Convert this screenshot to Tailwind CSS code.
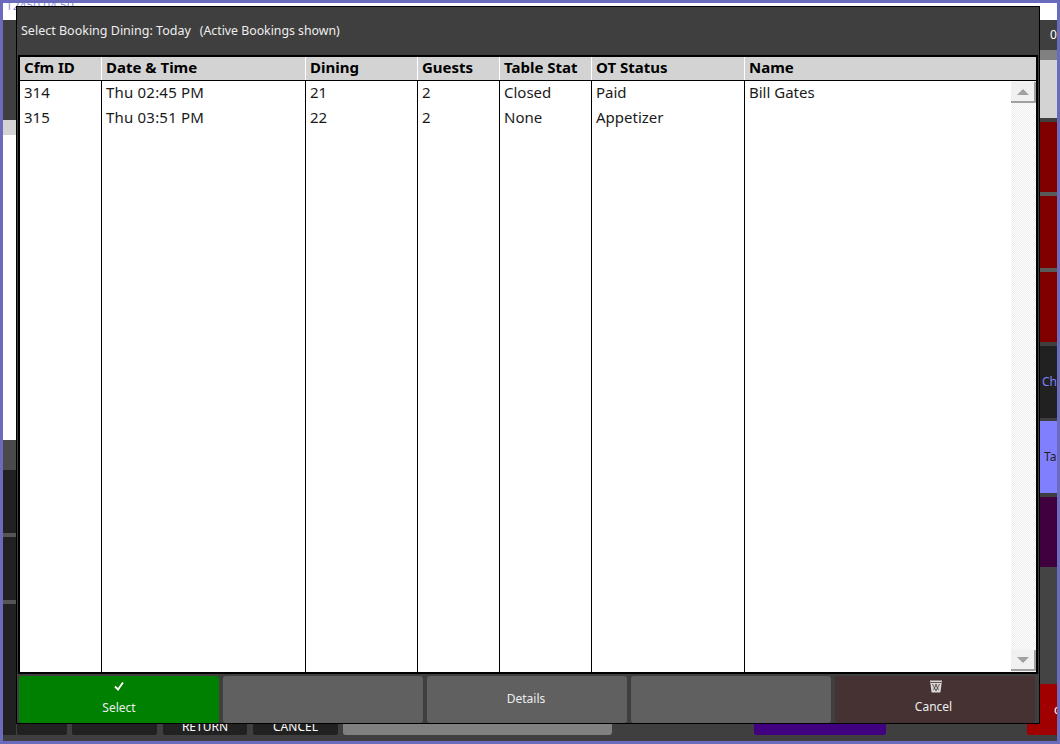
<!DOCTYPE html>
<html>
<head>
<meta charset="utf-8">
<script src="https://cdn.jsdelivr.net/npm/@tailwindcss/browser@4"></script>
</head>
<body class="m-0 overflow-hidden bg-[#6b6bbd]">
<div class="relative flex h-[744px] w-[1060px] flex-col overflow-hidden border-[3px] border-[#6b6bbd] bg-[#3f3f3f] font-['Noto_Sans','Open_Sans',sans-serif]">
  <!-- top white strip of the app behind -->
  <div class="h-[17px] shrink-0 overflow-hidden bg-white pl-[3px] text-[12px] leading-[12px] text-[#8f8fe0]"><div class="-mt-[3px]">T2450 04 50</div></div>
  <div class="flex min-h-0 flex-1">
    <!-- left column of the app behind -->
    <div class="flex w-[13px] flex-col">
      <div class="h-[100px] bg-[#3f3f3f]"></div>
      <div class="h-[15px] bg-[#d3d3d3]"></div>
      <div class="h-[305px] bg-white"></div>
      <div class="h-[30px] bg-[#4a4a4a]"></div>
      <div class="flex flex-1 flex-col gap-[4px] bg-[#555]">
        <div class="h-[63px] bg-[#212121]"></div>
        <div class="h-[63px] bg-[#212121]"></div>
        <div class="flex-1 bg-[#212121]"></div>
      </div>
      <div class="h-[6px] bg-[#3f3f3f]"></div>
    </div>
    <!-- centre of the app behind -->
    <div class="flex flex-1 flex-col justify-end">
      <div class="mb-[6px] flex h-[20px] items-end text-[12px] text-white">
        <div class="ml-[1px] h-full w-[50px] rounded-b-[2px] bg-[#212121]"></div>
        <div class="ml-[5px] h-full w-[85px] rounded-b-[2px] bg-[#212121]"></div>
        <div class="ml-[6px] flex h-full w-[84px] items-end justify-center rounded-b-[2px] bg-[#212121] leading-[16px]">RETURN</div>
        <div class="ml-[6px] flex h-full w-[85px] items-end justify-center rounded-b-[2px] bg-[#212121] leading-[16px]">CANCEL</div>
        <div class="ml-[5px] h-full w-[269px] rounded-b-[3px] bg-[#808080]"></div>
        <div class="ml-[142px] h-full w-[132px] rounded-b-[3px] bg-[#400080]"></div>
        <div class="ml-auto h-full w-[13px] rounded-bl-[3px] bg-[#a00000]"></div>
      </div>
    </div>
    <!-- right column of the app behind -->
    <div class="flex w-[17px] flex-col text-[12px]">
      <div class="flex h-[30px] items-center overflow-hidden bg-[#3f3f3f] pl-[10px] text-white">0</div>
      <div class="h-[10px] bg-[#808080]"></div>
      <div class="h-[58px] bg-[#d3d3d3]"></div>
      <div class="h-[4px] bg-[#3f3f3f]"></div>
      <div class="h-[70px] bg-[#800000]"></div>
      <div class="h-[4px] bg-[#5a5a5a]"></div>
      <div class="h-[72px] bg-[#800000]"></div>
      <div class="h-[4px] bg-[#5a5a5a]"></div>
      <div class="h-[70px] bg-[#800000]"></div>
      <div class="h-[4px] bg-[#3f3f3f]"></div>
      <div class="flex h-[72px] items-center overflow-hidden bg-[#212121] pl-[2px] text-[#8080ff]">Ch</div>
      <div class="h-[3px] bg-[#3f3f3f]"></div>
      <div class="flex h-[72px] items-center overflow-hidden bg-[#8080ff] pl-[4px] text-[#222]">Ta</div>
      <div class="h-[4px] bg-[#3f3f3f]"></div>
      <div class="h-[70px] bg-[#400040]"></div>
      <div class="h-[117px] bg-[#444]"></div>
      <div class="flex h-[51px] items-center overflow-hidden bg-[#a00000] pl-[14px] text-white">c</div>
      <div class="flex-1 bg-[#3f3f3f]"></div>
    </div>
  </div>

  <!-- modal dialog -->
  <div class="absolute left-[13px] top-[3px] flex h-[718px] w-[1024px] flex-col border border-black bg-[#3f3f3f]">
    <div class="flex h-[48px] items-center pl-[4px] text-[12.5px] text-[#eeeeee] whitespace-pre">Select Booking Dining: Today<span class="ml-[9px] text-[12.3px]">(Active Bookings shown)</span></div>
    <div class="mx-[1px] flex h-[619px] flex-col border-2 border-black bg-white text-[15px] text-[#1a1a1a]">
      <div class="flex h-[24px] shrink-0 border-b border-black bg-[#d3d3d3] font-bold leading-[20px] text-black">
        <div class="w-[82px] border-r border-white pl-[4px]">Cfm ID</div>
        <div class="w-[204px] border-r border-white pl-[4px]">Date &amp; Time</div>
        <div class="w-[112px] border-r border-white pl-[4px]">Dining</div>
        <div class="w-[82px] border-r border-white pl-[4px]">Guests</div>
        <div class="w-[92px] border-r border-white pl-[4px]">Table Stat</div>
        <div class="w-[153px] border-r border-white pl-[4px]">OT Status</div>
        <div class="flex-1 pl-[4px]">Name</div>
      </div>
      <div class="flex min-h-0 flex-1 leading-[23px]">
        <div class="w-[82px] border-r border-black pl-[4px]"><div class="h-[25px]">314</div><div class="h-[25px]">315</div></div>
        <div class="w-[204px] border-r border-black pl-[4px]"><div class="h-[25px] tracking-[0.2px]">Thu 02:45 PM</div><div class="h-[25px] tracking-[0.2px]">Thu 03:51 PM</div></div>
        <div class="w-[112px] border-r border-black pl-[4px]"><div class="h-[25px]">21</div><div class="h-[25px]">22</div></div>
        <div class="w-[82px] border-r border-black pl-[4px]"><div class="h-[25px]">2</div><div class="h-[25px]">2</div></div>
        <div class="w-[92px] border-r border-black pl-[4px]"><div class="h-[25px]">Closed</div><div class="h-[25px]">None</div></div>
        <div class="w-[153px] border-r border-black pl-[4px]"><div class="h-[25px]">Paid</div><div class="h-[25px]">Appetizer</div></div>
        <div class="flex-1 pl-[4px]"><div class="h-[25px]">Bill Gates</div></div>
        <div class="flex w-[25px] flex-col justify-between bg-[repeating-conic-gradient(#ececec_0_25%,#ffffff_0_50%)] bg-[length:2px_2px] py-[1px]">
          <div class="flex h-[21px] items-center justify-center border-r-2 border-b-2 border-[#a0a0a0] bg-[#f0f0f0]">
            <svg width="12" height="6" viewBox="0 0 12 6"><path d="M6 0L12 6H0Z" fill="#a0a0a0"/></svg>
          </div>
          <div class="flex h-[21px] items-center justify-center border-r-2 border-b-2 border-[#a0a0a0] bg-[#f0f0f0]">
            <svg width="12" height="6" viewBox="0 0 12 6"><path d="M0 0H12L6 6Z" fill="#a0a0a0"/></svg>
          </div>
        </div>
      </div>
    </div>
    <div class="mt-[2px] flex gap-[4px] pl-[2px] text-[12px] text-[#eeeeee]">
      <div class="flex h-[47px] w-[200px] flex-col items-center rounded-[3px] bg-[#008000] pt-[3px]">
        <svg class="h-[14px] w-[14px]" viewBox="0 0 14 14"><path d="M3 7.5L6 10.5L11 3.5" fill="none" stroke="#ffffff" stroke-width="1.8"/></svg>
        <span class="mt-[7px] leading-[16px]">Select</span>
      </div>
      <div class="h-[47px] w-[200px] rounded-[3px] bg-[#606060]"></div>
      <div class="flex h-[47px] w-[200px] items-center justify-center rounded-[3px] bg-[#606060] pr-[2px] pb-[2px]">Details</div>
      <div class="h-[47px] w-[200px] rounded-[3px] bg-[#606060]"></div>
      <div class="flex h-[47px] w-[200px] flex-col items-center rounded-[3px] bg-[#463232] pt-[4px]">
        <svg class="ml-[2px] h-[13px] w-[12px]" viewBox="0 0 12 13"><path d="M0 0.5H12L10.4 12.5H1.6Z" fill="#d8d8d8"/><path d="M0.5 2.5H11.5" stroke="#463232" stroke-width=".8"/><path d="M2.5 4L6 11M5.5 4L8.5 10M9.5 4L6 11M6.5 4L3.5 10" stroke="#463232" stroke-width=".8"/></svg>
        <span class="mr-[3px] mt-[6px] leading-[16px]">Cancel</span>
      </div>
    </div>
  </div>
</div>
</body>
</html>
